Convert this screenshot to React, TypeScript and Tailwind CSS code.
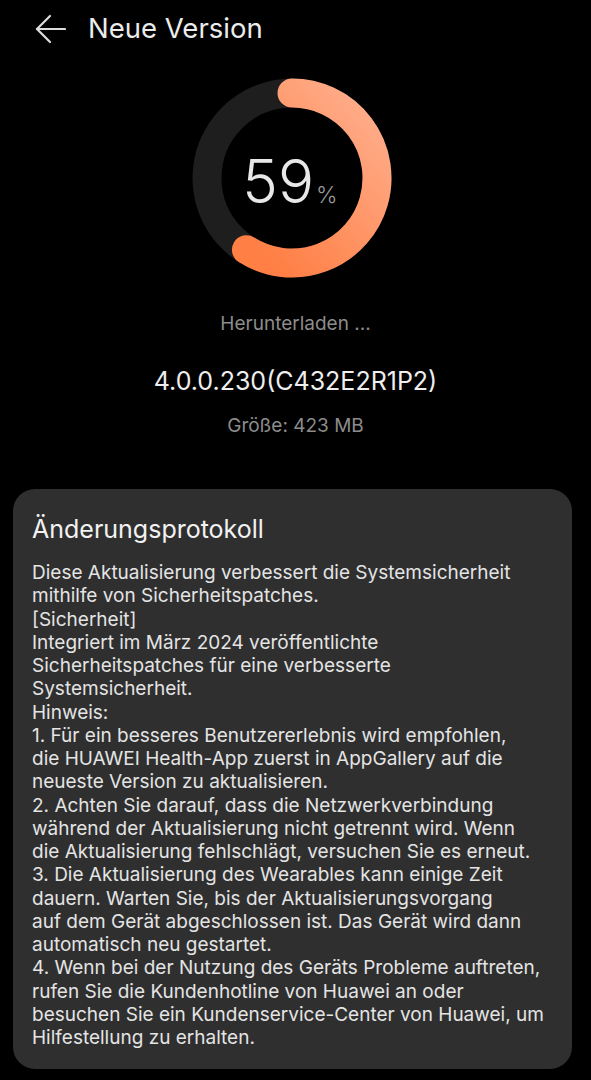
import React from "react";

const lines = [
  "Diese Aktualisierung verbessert die Systemsicherheit",
  "mithilfe von Sicherheitspatches.",
  "[Sicherheit]",
  "Integriert im März 2024 veröffentlichte",
  "Sicherheitspatches für eine verbesserte",
  "Systemsicherheit.",
  "Hinweis:",
  "1. Für ein besseres Benutzererlebnis wird empfohlen,",
  "die HUAWEI Health-App zuerst in AppGallery auf die",
  "neueste Version zu aktualisieren.",
  "2. Achten Sie darauf, dass die Netzwerkverbindung",
  "während der Aktualisierung nicht getrennt wird. Wenn",
  "die Aktualisierung fehlschlägt, versuchen Sie es erneut.",
  "3. Die Aktualisierung des Wearables kann einige Zeit",
  "dauern. Warten Sie, bis der Aktualisierungsvorgang",
  "auf dem Gerät abgeschlossen ist. Das Gerät wird dann",
  "automatisch neu gestartet.",
  "4. Wenn bei der Nutzung des Geräts Probleme auftreten,",
  "rufen Sie die Kundenhotline von Huawei an oder",
  "besuchen Sie ein Kundenservice-Center von Huawei, um",
  "Hilfestellung zu erhalten.",
];

function Ring() {
  const r = 85;
  const a = ((-90 + 0.59 * 360) * Math.PI) / 180;
  const ex = 100 + r * Math.cos(a);
  const ey = 100 + r * Math.sin(a);
  return (
    <svg width="200" height="200" viewBox="0 0 200 200" className="absolute inset-0">
      <defs>
        <linearGradient id="g" x1="1" y1="0" x2="0.2" y2="1">
          <stop offset="0" stopColor="#ffb08f" />
          <stop offset="1" stopColor="#ff7f45" />
        </linearGradient>
      </defs>
      <circle cx="100" cy="100" r={r} fill="none" stroke="#1e1e1e" strokeWidth="29" />
      <path
        d={`M 100 15 A ${r} ${r} 0 1 1 ${ex} ${ey}`}
        fill="none"
        stroke="url(#g)"
        strokeWidth="29"
        strokeLinecap="round"
      />
    </svg>
  );
}

export default function App() {
  return (
    <div
      className="w-[591px] min-h-[1080px] bg-black flex flex-col"
      style={{ fontFamily: "Inter, 'Noto Sans', sans-serif" }}
    >
      <div className="flex items-center h-[58px] pl-[35px]">
        <svg width="31" height="30" viewBox="0 0 31 30" fill="none" stroke="#dcdcdc" strokeWidth="2.2" strokeLinecap="round" strokeLinejoin="round">
          <path d="M2 15 H30" />
          <path d="M15 2 L2 15 L15 28" />
        </svg>
        <span className="ml-[22px] text-[27.5px] text-[#ececec] leading-none">Neue Version</span>
      </div>
      <div className="flex justify-center mt-[20px] pr-[7px]">
        <div className="relative w-[200px] h-[200px]">
          <Ring />
          <div className="absolute inset-0 flex items-center justify-center pt-[6px] pr-[4px]">
            <div className="flex items-baseline">
              <span className="text-[60px] font-light text-[#e8e8e8] leading-none">59</span>
              <span className="text-[23px] font-light text-[#9a9a9a] ml-[2px] leading-none">%</span>
            </div>
          </div>
        </div>
      </div>
      <div className="text-center text-[19px] text-[#8c8c8c] mt-[36px] leading-none">Herunterladen ...</div>
      <div className="text-center text-[25px] text-[#eeeeee] mt-[36px] leading-none">4.0.0.230(C432E2R1P2)</div>
      <div className="text-center text-[19px] text-[#8c8c8c] mt-[22px] leading-none">Größe: 423 MB</div>
      <div className="ml-[13px] w-[559px] mt-[54px] bg-[#2f2f2f] rounded-[22px] pl-[19px] pr-[6px] pt-[25px] pb-[20px]">
        <div className="text-[25px] text-[#f2f2f2] leading-[30px]">Änderungsprotokoll</div>
        <div className="mt-[17px] text-[19px] leading-[23.25px] text-[#e4e4e4]">
          {lines.map((l, i) => (
            <div key={i} className="whitespace-nowrap">{l}</div>
          ))}
        </div>
      </div>
    </div>
  );
}
